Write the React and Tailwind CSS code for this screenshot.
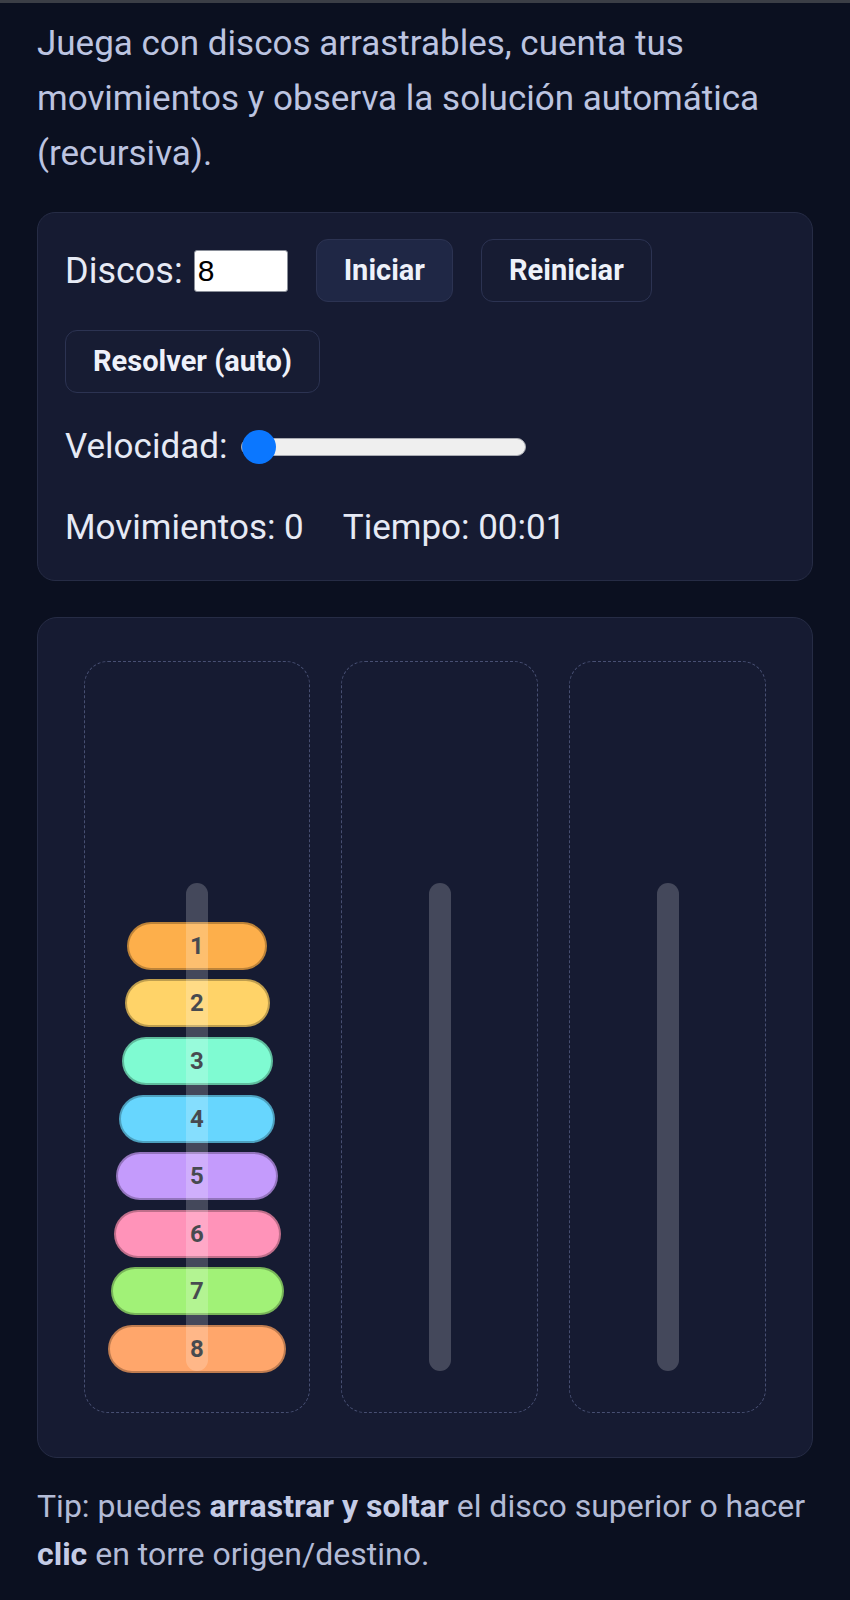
import React from 'react';

const disks = [
  { n: 1, w: 'w-[140px]', bg: 'bg-[#fdaf4b]' },
  { n: 2, w: 'w-[145px]', bg: 'bg-[#ffd368]' },
  { n: 3, w: 'w-[151px]', bg: 'bg-[#7ffbd2]' },
  { n: 4, w: 'w-[156px]', bg: 'bg-[#67d6fe]' },
  { n: 5, w: 'w-[162px]', bg: 'bg-[#c49bfc]' },
  { n: 6, w: 'w-[167px]', bg: 'bg-[#ff93b9]' },
  { n: 7, w: 'w-[173px]', bg: 'bg-[#a1f277]' },
  { n: 8, w: 'w-[178px]', bg: 'bg-[#ffa66b]' },
];

function Tower({ items = [] }) {
  return (
    <div className="relative flex-1 basis-0 h-[752px] rounded-[24px] border border-dashed border-[#474f72] flex flex-col items-center justify-end gap-[9.6px] pb-[39px] px-[23px]">
      {items.map((d) => (
        <div
          key={d.n}
          className={`${d.w} ${d.bg} h-[48px] shrink-0 rounded-full border-2 border-black/25 flex items-center justify-center text-[24px] font-bold text-[#1a1d25]`}
        >
          {d.n}
        </div>
      ))}
      <div className="absolute bottom-[41px] left-1/2 -translate-x-1/2 w-[22px] h-[488px] rounded-full bg-white/20 z-10" />
    </div>
  );
}

function Button({ children, active = false }) {
  return (
    <button
      className={`h-[63px] px-[27px] rounded-[12px] border border-[#2c3352] text-[29px] font-bold text-[#eef1fa] ${active ? 'bg-[#1f2745]' : 'bg-[#171c33]'}`}
    >
      {children}
    </button>
  );
}

export default function App() {
  return (
    <div className="min-h-screen bg-[#0b1020] font-['Roboto',sans-serif]">
      <div className="h-[3px] bg-[#3b3e46]" />
      <div className="px-[37px]">
        <p className="mt-[13px] text-[35px] leading-[55px] text-[#bcc4e0]">
          Juega con discos arrastrables, cuenta tus movimientos y observa la solución automática (recursiva).
        </p>

        <div className="mt-[31px] rounded-[18px] border border-[#262c45] bg-[#161b32] px-[27px] pt-[26px] pb-[31px] text-[#e6eaf5]">
          <div className="flex flex-wrap items-center gap-[28px]">
            <div className="flex items-center gap-[11px]">
              <span className="text-[36px]">Discos:</span>
              <input
                type="text"
                readOnly
                value="8"
                className="w-[94px] h-[42px] bg-white rounded-[3px] border border-[#8a8f99] text-black text-[30px] pl-[3px] outline-none font-['Liberation_Sans',sans-serif]"
              />
            </div>
            <Button active>Iniciar</Button>
            <Button>Reiniciar</Button>
            <Button>Resolver (auto)</Button>
          </div>

          <div className="mt-[28px] h-[52px] flex items-center gap-[14px]">
            <span className="text-[35px]">Velocidad:</span>
            <div className="relative w-[285px] h-[18px] rounded-full bg-[#efefef] border border-[#a9abb2]">
              <div className="absolute left-0 top-1/2 -translate-y-1/2 w-[34px] h-[34px] rounded-full bg-[#0b77ff]" />
            </div>
          </div>

          <div className="mt-[34px] flex gap-[39px] text-[35px] leading-[42px]">
            <span>Movimientos: 0</span>
            <span>Tiempo: 00:01</span>
          </div>
        </div>

        <div className="mt-[36px] rounded-[20px] border border-[#262c45] bg-[#161b32] px-[46px] pt-[43px] pb-[44px] flex gap-[31px]">
          <Tower items={disks} />
          <Tower />
          <Tower />
        </div>

        <p className="mt-[24px] text-[32px] leading-[48px] text-[#b3bbd6]">
          Tip: puedes <b className="font-bold text-[#c5cce6]">arrastrar y soltar</b> el disco superior o hacer{' '}
          <b className="font-bold text-[#c5cce6]">clic</b> en torre origen/destino.
        </p>
      </div>
    </div>
  );
}
